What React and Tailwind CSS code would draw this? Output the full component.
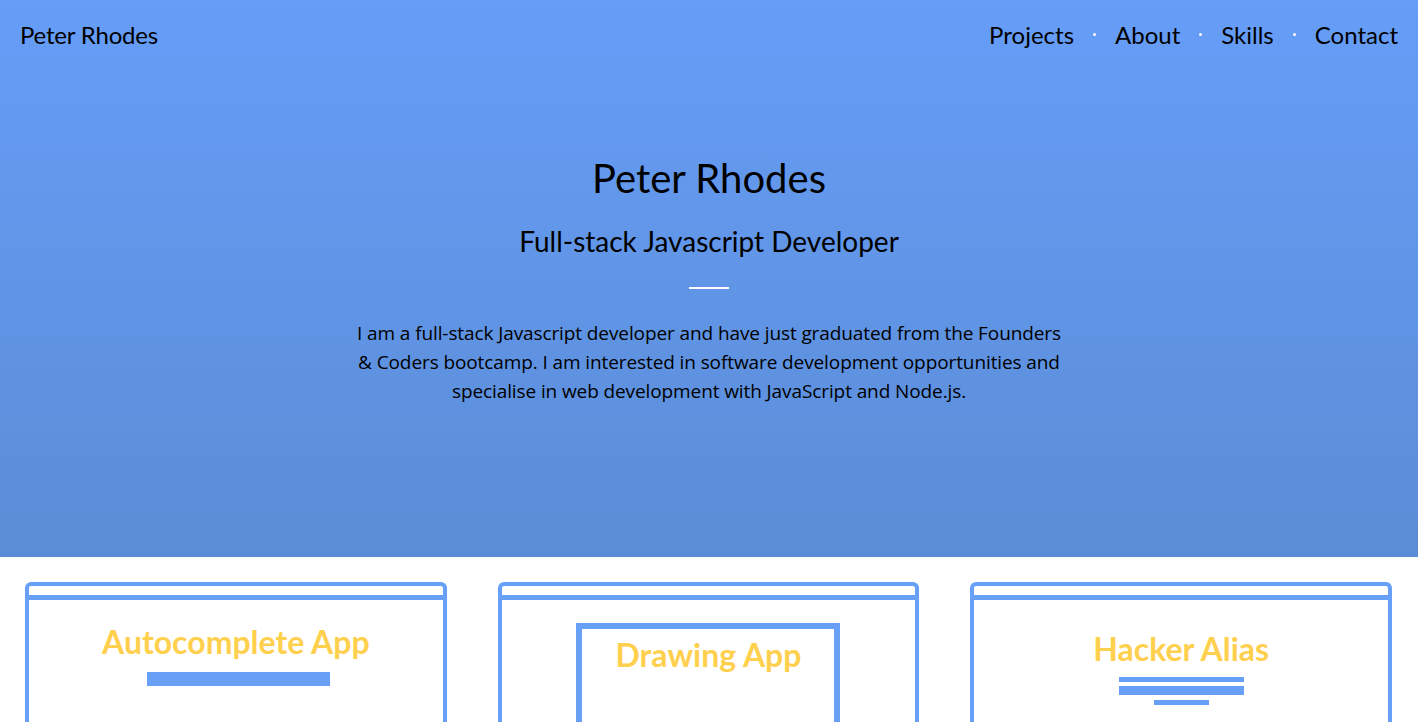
import React from "react";

const navLinks = ["Projects", "About", "Skills", "Contact"];

function BrowserCard({ children }) {
  return (
    <div className="h-[200px] rounded-t-[6px] border-4 border-b-0 border-[#67a0f6] flex flex-col">
      <div className="h-[9px] border-b-[5px] border-[#67a0f6] box-content" />
      <div className="flex-1 flex flex-col items-center">{children}</div>
    </div>
  );
}

export default function App() {
  return (
    <div className="min-h-screen bg-white" style={{ fontFamily: "Lato, 'Noto Sans', sans-serif" }}>
      {/* Hero */}
      <header className="h-[557px] bg-gradient-to-b from-[#669df7] to-[#5b8dd6] text-black">
        <nav className="flex items-center justify-between pl-5 pr-5 h-[69px]">
          <a className="text-[24px] tracking-[-0.2px]">Peter Rhodes</a>
          <ul className="flex items-center text-[24px]">
            {navLinks.map((l, i) => (
              <li key={l} className="flex items-center">
                {i > 0 && <span className="mx-[19px] w-[3px] h-[3px] rounded-full bg-white" />}
                <a>{l}</a>
              </li>
            ))}
          </ul>
        </nav>
        <div className="flex flex-col items-center text-center pt-[84px]">
          <h1 className="text-[40px] leading-[50px]">Peter Rhodes</h1>
          <h2 className="text-[28px] leading-[36px] mt-[20px]">Full-stack Javascript Developer</h2>
          <div className="w-10 h-[2px] bg-white mt-[28px]" />
          <p className="max-w-[718px] text-[19px] leading-[29px] mt-[30px] font-['Open_Sans',sans-serif] tracking-[-0.1px]">
            I am a full-stack Javascript developer and have just graduated from the Founders &amp; Coders
            bootcamp. I am interested in software development opportunities and specialise in web
            development with JavaScript and Node.js.
          </p>
        </div>
      </header>

      {/* Projects */}
      <section className="grid grid-cols-3 gap-[51px] pl-[25px] pr-[26px] pt-[25px]">
        <BrowserCard>
          <h3 className="mt-[22px] text-[32px] font-bold text-[#ffd04d] leading-[40px]">Autocomplete App</h3>
          <div className="mt-[10px] ml-[6px] w-[183px] h-[14px] bg-[#67a0f6]" />
        </BrowserCard>
        <BrowserCard>
          <div className="mt-[23px] w-[264px] flex-1 border-[6px] border-b-0 border-[#67a0f6] flex justify-center">
            <h3 className="mt-[6px] text-[32px] font-bold text-[#ffd04d] leading-[40px]">Drawing App</h3>
          </div>
        </BrowserCard>
        <BrowserCard>
          <h3 className="mt-[29px] text-[32px] font-bold text-[#ffd04d] leading-[40px]">Hacker Alias</h3>
          <div className="mt-[8px] w-[125px] h-[5px] bg-[#67a0f6]" />
          <div className="mt-[4px] w-[125px] h-[9px] bg-[#67a0f6]" />
          <div className="mt-[5px] w-[55px] h-[5px] bg-[#67a0f6]" />
        </BrowserCard>
      </section>
    </div>
  );
}
